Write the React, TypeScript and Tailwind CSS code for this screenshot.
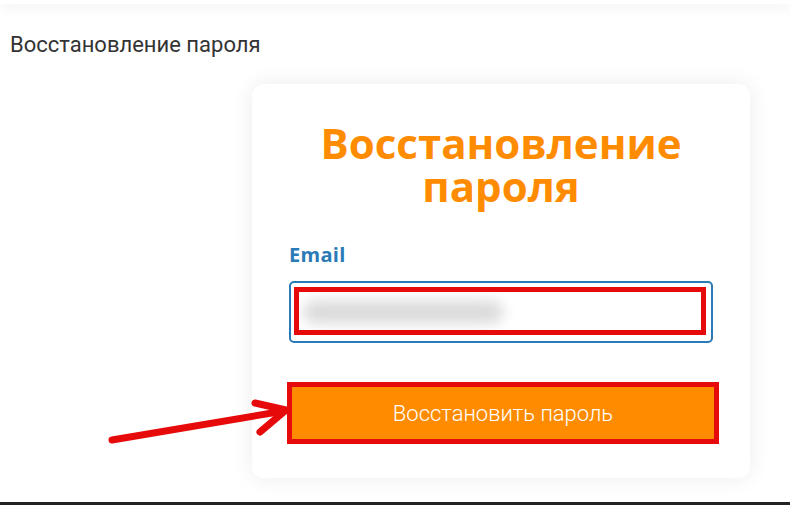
export default function App() {
  return (
    <div className="relative flex h-[505px] w-[790px] flex-col overflow-hidden bg-white font-['Roboto',sans-serif]">
      <div className="h-[4px] w-full bg-white shadow-[0_2px_14px_rgba(0,0,0,0.12)]"></div>

      <main className="flex-1">
        <div className="px-[10px] pt-[27px] text-[22px] leading-[28px] text-[#333]">Восстановление пароля</div>

        <div className="flex justify-end pr-[40px] pt-[25px]">
          <div className="w-[498px] rounded-[12px] bg-white px-[37px] pt-[37px] pb-[34px] shadow-[0_0_22px_rgba(0,0,0,0.08)]">
            <h1 className="text-center font-['Open_Sans',sans-serif] text-[42px] font-bold leading-[43px] text-[#ff8c00]">
              Восстановление
              <br />
              пароля
            </h1>

            <label className="mt-[35px] block font-['Open_Sans',sans-serif] text-[20px] font-bold leading-[26px] tracking-[0.3px] text-[#2a7ab8]">
              Email
            </label>

            <div className="mt-[13px] h-[62px] w-[424px] rounded-[5px] border-2 border-[#2a7ab8] p-[4px] pl-[3px]">
              <div className="relative h-[48px] w-[412px] overflow-hidden border-[5px] border-[#e60a0a]">
                <div className="absolute left-[4px] top-[9px] h-[22px] w-[200px] rounded-full bg-[#d9d9d9] blur-[7px]"></div>
              </div>
            </div>

            <button className="mt-[39px] -ml-[2px] flex h-[62px] w-[432px] items-center justify-center border-[5px] border-[#e60a0a] bg-[#ff8c00] text-[22px] font-light text-white">
              Восстановить пароль
            </button>
          </div>
        </div>
      </main>

      <div className="h-[3px] w-full bg-[#222]"></div>

      <svg className="absolute left-0 top-0" width="790" height="505" viewBox="0 0 790 505">
        <g stroke="#e60a0a" strokeWidth="7" strokeLinecap="round" strokeLinejoin="round" fill="none">
          <line x1="112" y1="440" x2="284" y2="411" />
          <polyline points="255,403 286,410 260,432" />
        </g>
      </svg>
    </div>
  );
}
